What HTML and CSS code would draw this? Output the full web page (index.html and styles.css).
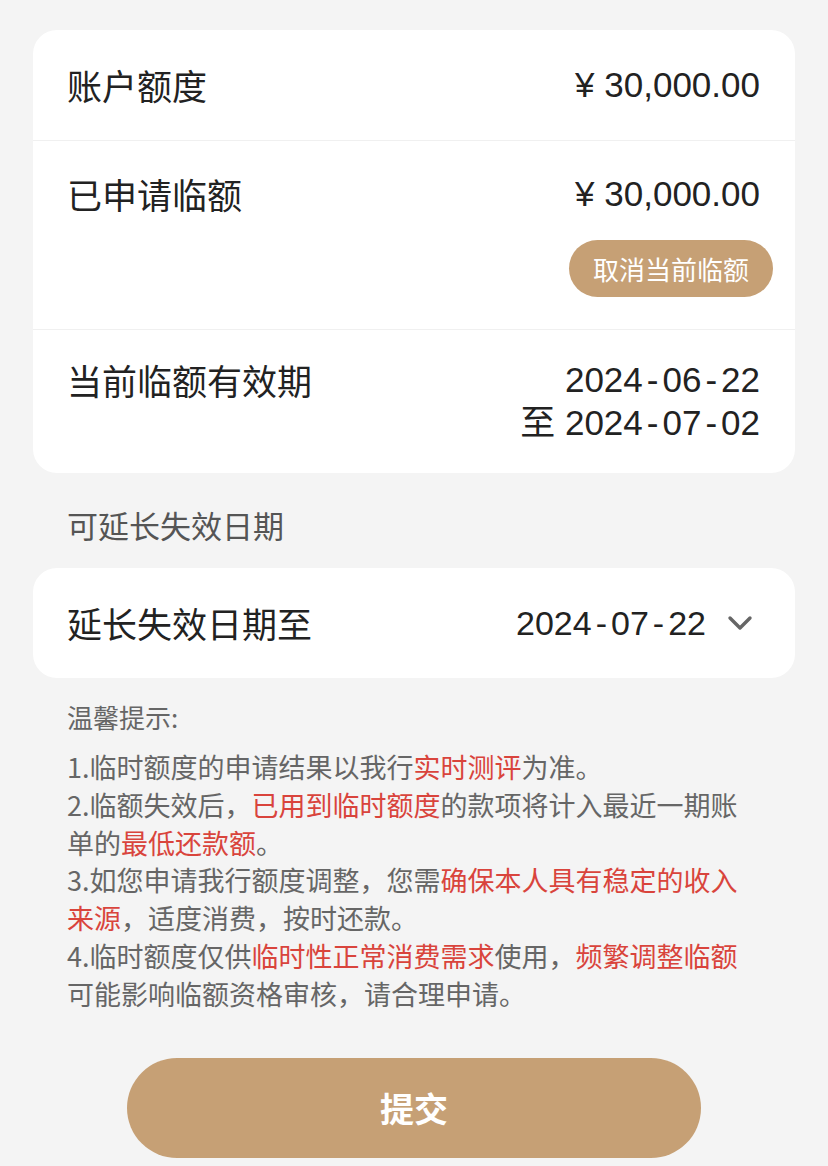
FILE: index.html
```html
<!DOCTYPE html>
<html lang="zh-CN">
<head>
    <meta charset="UTF-8">
    <meta name="viewport" content="width=device-width, initial-scale=1.0">
    <title>临时额度</title>
    <link rel="stylesheet" href="styles.css">
</head>
<body>

<div class="page">
    <!-- 额度信息 -->
    <div class="card">
        <div class="row row-first">
            <span class="label">账户额度</span>
            <span class="value">¥ 30,000.00</span>
        </div>
        <div class="row row-applied">
            <span class="label">已申请临额</span>
            <div class="right">
                <span class="value">¥ 30,000.00</span>
                <button class="btn-cancel">取消当前临额</button>
            </div>
        </div>
        <div class="row row-period">
            <span class="label">当前临额有效期</span>
            <div class="right dates">
                <span>2024<i>-</i>06<i>-</i>22</span>
                <span>至 2024<i>-</i>07<i>-</i>02</span>
            </div>
        </div>
    </div>

    <div class="section-title">可延长失效日期</div>

    <!-- 延长日期 -->
    <div class="card">
        <div class="row row-select">
            <span class="label">延长失效日期至</span>
            <div class="select">
                <span class="value date">2024<i>-</i>07<i>-</i>22</span>
                <svg class="chevron" width="26" height="16" viewBox="0 0 26 16">
                    <path d="M3 3 L13 13 L23 3" fill="none" stroke="#666" stroke-width="3.4" stroke-linecap="round" stroke-linejoin="round"/>
                </svg>
            </div>
        </div>
    </div>

    <!-- 温馨提示 -->
    <div class="tips">
        <div class="tips-title">温馨提示:</div>
        <p>1.临时额度的申请结果以我行<em>实时测评</em>为准。</p>
        <p>2.临额失效后，<em>已用到临时额度</em>的款项将计入最近一期账单的<em>最低还款额</em>。</p>
        <p>3.如您申请我行额度调整，您需<em>确保本人具有稳定的收入来源</em>，适度消费，按时还款。</p>
        <p>4.临时额度仅供<em>临时性正常消费需求</em>使用，<em>频繁调整临额</em>可能影响临额资格审核，请合理申请。</p>
    </div>

    <button class="btn-submit">提交</button>
</div>

</body>
</html>
```

FILE: styles.css
```css
body {
    margin: 0;
    padding: 0;
    background-color: #f4f4f4;
    font-family: "Noto Sans CJK SC", "Noto Sans", sans-serif;
    color: #222;
}

.page {
    padding: 30px 33px 0 33px;
}

/* 白色卡片 */
.card {
    background-color: #fff;
    border-radius: 24px;
    overflow: hidden;
}

.row {
    display: flex;
    justify-content: space-between;
    padding: 0 35px 0 34px;
    border-bottom: 1px solid #f0f0f0;
}

.row:last-child {
    border-bottom: none;
}

.label {
    font-size: 35px;
    line-height: 38px;
}

.value {
    font-family: "Liberation Sans", Arial, sans-serif;
    font-size: 35px;
    line-height: 38px;
}

/* 日期里的连字符稍宽一些 */
.dates i,
.date i {
    font-style: normal;
    margin: 0 4px;
}

.row-first {
    height: 110px;
    align-items: center;
}

.row-applied {
    padding-top: 34px;
    padding-bottom: 32px;
}

.right {
    display: flex;
    flex-direction: column;
    align-items: flex-end;
}

.btn-cancel {
    margin-top: 27px;
    margin-right: -13px;
    height: 57px;
    padding: 0 24px;
    border: none;
    border-radius: 29px;
    background-color: #c6a075;
    color: #fff;
    font-family: "Noto Sans CJK SC", sans-serif;
    font-size: 26px;
}

.row-period {
    padding-top: 28px;
    padding-bottom: 29px;
}

.row-period .label {
    line-height: 43px;
}

.dates span {
    font-family: "Liberation Sans", Arial, "Noto Sans CJK SC", sans-serif;
    font-size: 35px;
    line-height: 43px;
}

.section-title {
    padding: 32px 0 23px 34px;
    font-size: 31px;
    line-height: 40px;
    color: #555;
}

.row-select {
    height: 110px;
    align-items: center;
    padding-right: 42px;
}

.date {
    font-size: 34px;
}

.select {
    display: flex;
    align-items: center;
}

.chevron {
    margin-left: 21px;
}

/* 温馨提示 */
.tips {
    padding: 22px 0 0 34px;
    width: 686px;
    color: #666;
}

.tips-title {
    font-size: 26px;
    line-height: 34px;
    margin-bottom: 14px;
}

.tips p {
    margin: 0;
    font-size: 27px;
    line-height: 37.8px;
}

.tips em {
    font-style: normal;
    color: #d9443c;
}

.btn-submit {
    display: block;
    margin: 45px auto 0 auto;
    width: 574px;
    height: 100px;
    border: none;
    border-radius: 50px;
    background-color: #c6a075;
    color: #fff;
    font-family: "Noto Sans CJK SC", sans-serif;
    font-size: 34px;
    font-weight: bold;
}
```
